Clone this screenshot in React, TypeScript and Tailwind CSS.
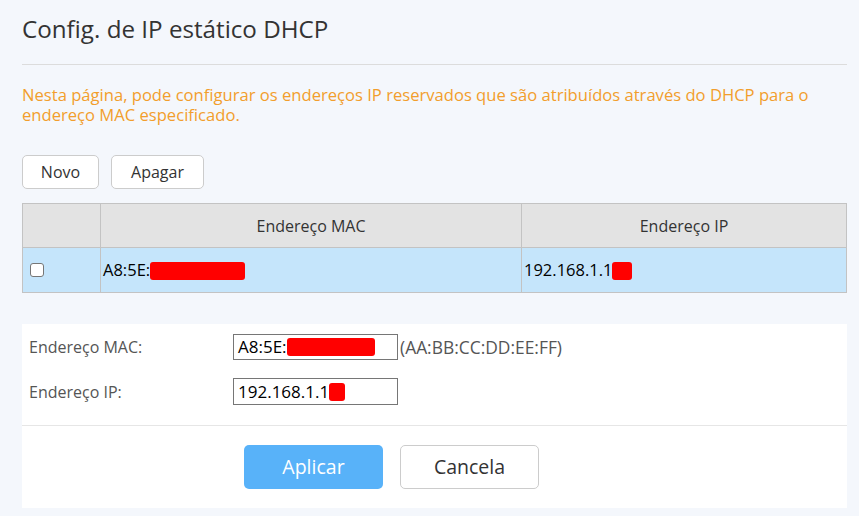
import * as React from "react";

const font = "font-['Trebuchet_MS','Open_Sans',sans-serif]";

function Redact({ w }: { w: number }) {
  return (
    <span
      className="inline-block h-[18px] rounded-[3px] bg-[#ff0000] align-middle"
      style={{ width: w }}
    />
  );
}

export default function App() {
  return (
    <div className={`min-h-screen bg-[#f4f7fc] ${font}`}>
      <div className="ml-[22px] w-[825px] pt-[14px]">
        <h1 className="text-[24.2px] leading-[30px] text-[#333]">Config. de IP estático DHCP</h1>
        <div className="mt-[20px] h-px bg-[#dcdcdc]" />

        <p className="mt-[20px] text-[16.6px] leading-[20px] text-[#f29e2c]">
          Nesta página, pode configurar os endereços IP reservados que são atribuídos através do DHCP para o
          endereço MAC especificado.
        </p>

        <div className="mt-[30px] flex gap-[12px]">
          <button className="h-[34px] w-[77px] rounded-[5px] border border-[#cccccc] bg-white text-[16px] text-[#333]">
            Novo
          </button>
          <button className="h-[34px] w-[93px] rounded-[5px] border border-[#cccccc] bg-white text-[16px] text-[#333]">
            Apagar
          </button>
        </div>

        <table className="mt-[14px] w-full border-collapse text-[16px]">
          <thead>
            <tr className="h-[44px] bg-[#e3e3e3] text-[#333]">
              <th className="w-[78px] border border-[#c3c3c3] font-normal" />
              <th className="w-[421px] border border-[#c3c3c3] font-normal">Endereço MAC</th>
              <th className="border border-[#c3c3c3] font-normal">Endereço IP</th>
            </tr>
          </thead>
          <tbody>
            <tr className="h-[45px] bg-[#c5e5fb] text-[16.5px] text-black">
              <td className="border border-[#c3c3c3] pl-[7px]">
                <span className="block h-[14px] w-[14px] rounded-[3px] border border-[#767676] bg-white" />
              </td>
              <td className="border border-[#c3c3c3] pl-[2px]">
                A8:5E:
                <Redact w={95} />
              </td>
              <td className="border border-[#c3c3c3] pl-[2px]">
                192.168.1.1
                <Redact w={20} />
              </td>
            </tr>
          </tbody>
        </table>

        <div className="mt-[31px] bg-white pt-[10px] pb-[19px]">
          <div className="flex flex-col gap-[18px] px-[7px]">
            <div className="flex h-[26px] items-center">
              <span className="w-[204px] text-[16px] text-[#555]">Endereço MAC:</span>
              <div className="flex h-[26px] w-[165px] items-center border border-[#767676] pl-[4px] text-[17px] text-black">
                A8:5E:
                <Redact w={88} />
              </div>
              <span className="ml-[2px] text-[17.4px] text-[#555]">(AA:BB:CC:DD:EE:FF)</span>
            </div>
            <div className="flex h-[27px] items-center">
              <span className="w-[204px] text-[16px] text-[#555]">Endereço IP:</span>
              <div className="flex h-[27px] w-[165px] items-center border border-[#767676] pl-[4px] text-[17px] text-black">
                192.168.1.1
                <Redact w={16} />
              </div>
            </div>
          </div>

          <div className="mt-[20px] h-px bg-[#e6e6e6]" />

          <div className="mt-[19px] flex gap-[17px] pl-[222px]">
            <button className="h-[44px] w-[139px] rounded-[5px] bg-[#58b2f9] text-[19.5px] text-white">
              Aplicar
            </button>
            <button className="h-[44px] w-[139px] rounded-[5px] border border-[#cccccc] bg-white text-[19.5px] text-[#333]">
              Cancela
            </button>
          </div>
        </div>
      </div>
    </div>
  );
}
